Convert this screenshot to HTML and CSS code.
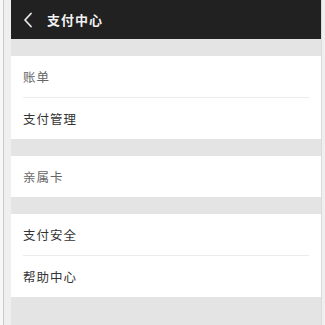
FILE: index.html
```html
<!DOCTYPE html>
<html lang="zh-CN">
<head>
    <meta charset="UTF-8">
    <meta name="viewport" content="width=device-width, initial-scale=1.0">
    <title>支付中心</title>
    <link rel="stylesheet" href="styles.css">
</head>
<body>
    <div class="screen">
        <div class="header">
            <svg class="back" width="10" height="16" viewBox="0 0 10 16">
                <path d="M8 1.5 L2 8 L8 14.5" fill="none" stroke="#e8e8e8" stroke-width="1.8" stroke-linecap="round" stroke-linejoin="round"/>
            </svg>
            <span class="title">支付中心</span>
        </div>

        <div class="group">
            <div class="row light">账单</div>
            <div class="row">支付管理</div>
        </div>

        <div class="group">
            <div class="row light">亲属卡</div>
        </div>

        <div class="group">
            <div class="row">支付安全</div>
            <div class="row">帮助中心</div>
        </div>
    </div>
</body>
</html>
```

FILE: styles.css
```css
body {
    margin: 0;
    height: 325px;
    overflow: hidden;
    font-family: "Noto Sans CJK SC", "Noto Sans", sans-serif;
    background: linear-gradient(to right, #f7f7f7 0, #f7f7f7 3px, #c8c8c8 3px, #c8c8c8 4px, #efefef 4px);
}
.screen {
    margin-left: 11px;
    width: 310px;
    height: 325px;
    background: #e4e4e4;
    border-right: 1px solid #dadada;
}
.header {
    height: 39px;
    background: #212121;
    display: flex;
    align-items: center;
    padding-left: 12px;
    box-sizing: border-box;
}
.back {
    margin-right: 14px;
}
.title {
    color: #f2f2f2;
    font-size: 13px;
    letter-spacing: 1px;
    font-weight: bold;
}
.group {
    background: #fff;
    margin-top: 17px;
}
.row {
    height: 41px;
    line-height: 41px;
    margin: 0 12px;
    font-size: 12.5px;
    color: #333;
    letter-spacing: 1px;
}
.row + .row {
    border-top: 1px solid #ececec;
}
.light {
    color: #666;
}
```
